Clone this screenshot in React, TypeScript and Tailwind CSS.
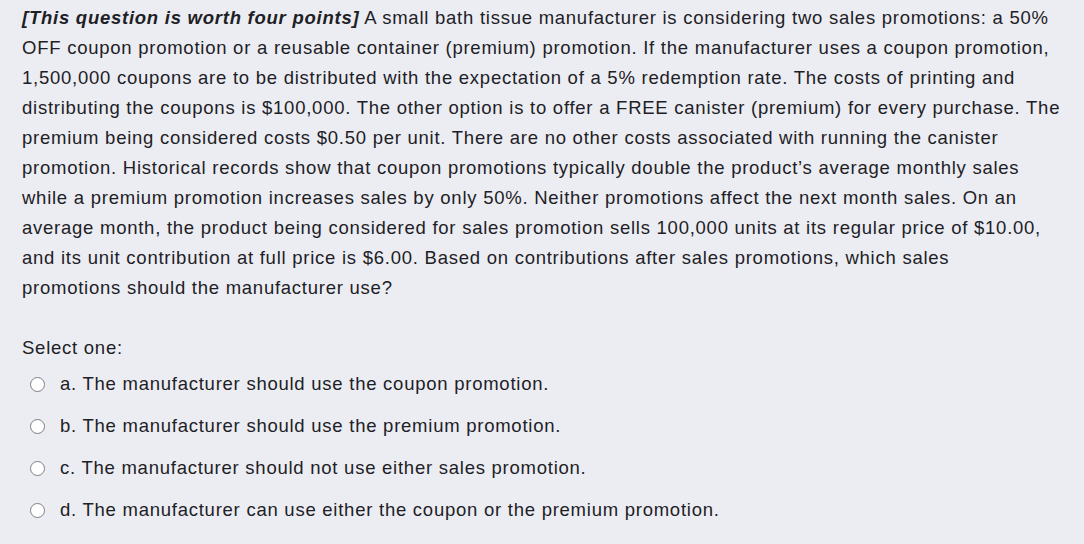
import React from "react";

const lines: React.ReactNode[] = [
  <>
    <b><i>[This question is worth four points]</i></b> A small bath tissue manufacturer is considering two sales promotions: a 50%
  </>,
  "OFF coupon promotion or a reusable container (premium) promotion. If the manufacturer uses a coupon promotion,",
  "1,500,000 coupons are to be distributed with the expectation of a 5% redemption rate. The costs of printing and",
  "distributing the coupons is $100,000. The other option is to offer a FREE canister (premium) for every purchase. The",
  "premium being considered costs $0.50 per unit. There are no other costs associated with running the canister",
  "promotion. Historical records show that coupon promotions typically double the product\u2019s average monthly sales",
  "while a premium promotion increases sales by only 50%. Neither promotions affect the next month sales. On an",
  "average month, the product being considered for sales promotion sells 100,000 units at its regular price of $10.00,",
  "and its unit contribution at full price is $6.00. Based on contributions after sales promotions, which sales",
  "promotions should the manufacturer use?",
];

const options = [
  "a. The manufacturer should use the coupon promotion.",
  "b. The manufacturer should use the premium promotion.",
  "c. The manufacturer should not use either sales promotion.",
  "d. The manufacturer can use either the coupon or the premium promotion.",
];

export default function App() {
  return (
    <div
      className="w-[1084px] h-[544px] bg-[#ecedf3] text-[#1d2125] text-[18.5px] tracking-[0.75px] overflow-hidden"
      style={{ fontFamily: '"Liberation Sans", Arial, sans-serif' }}
    >
      <div className="pl-[22px] pt-[3px] leading-[30px] whitespace-nowrap">
        {lines.map((l, i) => (
          <div key={i}>{l}</div>
        ))}
      </div>
      <div className="pl-[22px] mt-[30px] leading-[30px]">Select one:</div>
      <div className="flex flex-col gap-[12px] mt-[6px]">
        {options.map((o) => (
          <div key={o} className="flex items-center h-[30px] pl-[30px]">
            <span className="w-[15px] h-[15px] rounded-full border border-[#7d7f83] bg-white shrink-0" />
            <span className="ml-[15px] leading-[30px]">{o}</span>
          </div>
        ))}
      </div>
    </div>
  );
}
